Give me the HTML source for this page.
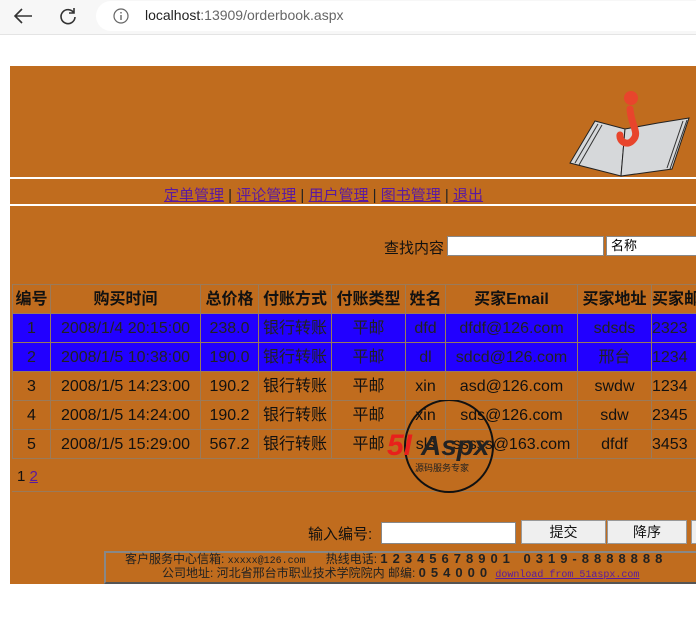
<!DOCTYPE html>
<html><head><meta charset="utf-8"><style>
*{margin:0;padding:0;box-sizing:border-box}
body{width:696px;height:641px;overflow:hidden;background:#fff;position:relative;font-family:"Liberation Sans","Noto Sans CJK SC",sans-serif}
.a{position:absolute}
.org{background:#C06C1E}
table{border-collapse:collapse;position:absolute;left:12px;top:284px;font-size:16px;color:#111;table-layout:fixed;width:700px}
td{border:1px solid #9a7a5a;height:29px;line-height:27px;padding:0;text-align:center;white-space:nowrap;overflow:hidden;vertical-align:middle;font-family:"Liberation Sans","Noto Sans CJK SC",sans-serif}
td span{display:inline-block;line-height:27px;height:27px;vertical-align:top}
tr.h td{font-weight:bold}
tr.b td{background:#2200ff;color:#222}
a{color:#5a1aa0;text-decoration:underline}
.btn{position:absolute;background:#efefef;border:1px solid #999;font-size:14px;text-align:center;line-height:22px;color:#111}
</style></head><body>
<div class="a" style="left:0;top:0;width:696px;height:34px;background:#f7f7f7"></div>
<svg class="a" style="left:12px;top:6px" width="24" height="20"><path d="M20 10H4M10 3L3 10l7 7" stroke="#333" stroke-width="1.6" fill="none"/></svg>
<svg class="a" style="left:58px;top:6px" width="20" height="20"><path d="M16 7A7 7 0 1 0 17 11M16 2v5h-5" stroke="#333" stroke-width="1.6" fill="none"/></svg>
<div class="a" style="left:96px;top:1px;width:620px;height:30px;border-radius:15px;background:#fff"></div>
<svg class="a" style="left:113px;top:8px" width="16" height="16"><circle cx="8" cy="8" r="7" stroke="#666" fill="none" stroke-width="1.2"/><path d="M8 7v5M8 4v1.5" stroke="#666" stroke-width="1.4"/></svg>
<div class="a" style="left:145px;top:7px;font-size:14px;color:#222">localhost<span style="color:#666">:13909/orderbook.aspx</span></div>
<div class="a" style="left:0;top:34px;width:696px;height:1px;background:#e4e4e4"></div>

<div class="a org" style="left:10px;top:66px;width:686px;height:518px"></div>
<div class="a" style="left:10px;top:177px;width:686px;height:2px;background:#fff"></div>
<div class="a" style="left:10px;top:204px;width:686px;height:2px;background:#fff"></div>
<svg class="a" style="left:565px;top:85px" width="131" height="95">
<polygon points="30,36 60,44 56,91 5,78" fill="#d6d8da" stroke="#222"/>
<polygon points="60,44 93,38 124,33 107,84 56,91" fill="#d6d8da" stroke="#222"/>
<path d="M33 39L10 78M37 40L14 80M118 36L102 83M122 35L105 84" stroke="#333"/>
<circle cx="66" cy="13" r="7" fill="#e8452c"/>
<path d="M65 24C66 40 75 48 68 55 62 62 54 56 55 50" stroke="#e8452c" stroke-width="7" fill="none" stroke-linecap="round"/>
</svg>
<div class="a" style="left:164px;top:184px;font-size:15px;color:#222"><a>定单管理</a> | <a>评论管理</a> | <a>用户管理</a> | <a>图书管理</a> | <a>退出</a></div>
<div class="a" style="left:384px;top:237px;font-size:15px;color:#111">查找内容</div>
<div class="a" style="left:447px;top:236px;width:157px;height:20px;background:#fff;border:1px solid #888"></div>
<div class="a" style="left:606px;top:236px;width:95px;height:20px;background:#fff;border:1px solid #888;font-size:13px;padding-left:4px;line-height:18px">名称</div>

<table>
<colgroup><col style="width:38px"><col style="width:150px"><col style="width:58px"><col style="width:73px"><col style="width:74px"><col style="width:40px"><col style="width:132px"><col style="width:74px"><col style="width:61px"></colgroup>
<tr class="h"><td>编号</td><td>购买时间</td><td>总价格</td><td>付账方式</td><td>付账类型</td><td>姓名</td><td>买家Email</td><td>买家地址</td><td style="text-align:left">买家邮</td></tr>
<tr class="b"><td>1</td><td>2008/1/4 20:15:00</td><td>238.0</td><td><span>银行转账</span></td><td><span>平邮</span></td><td>dfd</td><td>dfdf@126.com</td><td>sdsds</td><td style="text-align:left">2323</td></tr>
<tr class="b"><td>2</td><td>2008/1/5 10:38:00</td><td>190.0</td><td><span>银行转账</span></td><td><span>平邮</span></td><td>dl</td><td>sdcd@126.com</td><td><span>邢台</span></td><td style="text-align:left">1234</td></tr>
<tr><td>3</td><td>2008/1/5 14:23:00</td><td>190.2</td><td><span>银行转账</span></td><td><span>平邮</span></td><td>xin</td><td>asd@126.com</td><td>swdw</td><td style="text-align:left">1234</td></tr>
<tr><td>4</td><td>2008/1/5 14:24:00</td><td>190.2</td><td><span>银行转账</span></td><td><span>平邮</span></td><td>xin</td><td>sds@126.com</td><td>sdw</td><td style="text-align:left">2345</td></tr>
<tr><td>5</td><td>2008/1/5 15:29:00</td><td>567.2</td><td><span>银行转账</span></td><td><span>平邮</span></td><td>sls</td><td>sssss@163.com</td><td>dfdf</td><td style="text-align:left">3453</td></tr>
</table>
<div class="a" style="left:12px;top:459px;width:686px;height:33px;border-bottom:1px solid #9a7a5a"></div>
<div class="a" style="left:17px;top:468px;font-size:15px;color:#111">1 <a>2</a></div>
<svg class="a" style="left:385px;top:400px" width="130" height="95">
<ellipse cx="64" cy="46" rx="44" ry="46" stroke="#111" stroke-width="2" fill="none"/>
<text x="2" y="55" font-family="Liberation Sans,sans-serif" font-weight="bold" font-style="italic" font-size="30" fill="#e8201c">5I</text>
<text x="36" y="55" font-family="Liberation Sans,sans-serif" font-weight="bold" font-style="italic" font-size="28" fill="#222">Aspx</text>
<text x="30" y="71" font-family="Noto Sans CJK SC,sans-serif" font-size="9" fill="#222">源码服务专家</text>
</svg>
<div class="a" style="left:308px;top:523px;font-size:15px;color:#111">输入编号:</div>
<div class="a" style="left:381px;top:522px;width:135px;height:22px;background:#fff;border:1px solid #888"></div>
<div class="btn" style="left:521px;top:520px;width:85px;height:24px">提交</div>
<div class="btn" style="left:607px;top:520px;width:80px;height:24px">降序</div>
<div class="btn" style="left:691px;top:520px;width:20px;height:24px"></div>
<div class="a" style="left:104px;top:551px;width:600px;height:33px;border:2px solid #555;border-top-color:#888;border-left-color:#888"></div>
<div class="a" style="left:125px;top:552px;font-size:12px;color:#222;white-space:nowrap;line-height:14px">客户服务中心信箱: <span style="font-family:'Liberation Mono';font-size:10px">xxxxx@126.com</span>&nbsp;&nbsp;&nbsp;&nbsp;&nbsp;&nbsp;热线电话: <span style="letter-spacing:5px;font-weight:bold;font-size:13px">12345678901 0319-8888888</span></div>
<div class="a" style="left:162px;top:566px;font-size:12px;color:#222;white-space:nowrap;line-height:14px">公司地址: 河北省邢台市职业技术学院院内 邮编: <span style="letter-spacing:5px;font-weight:bold;font-size:13px">054000</span> <a style="font-family:'Liberation Mono';font-size:10px">download from 51aspx.com</a></div>
</body></html>
